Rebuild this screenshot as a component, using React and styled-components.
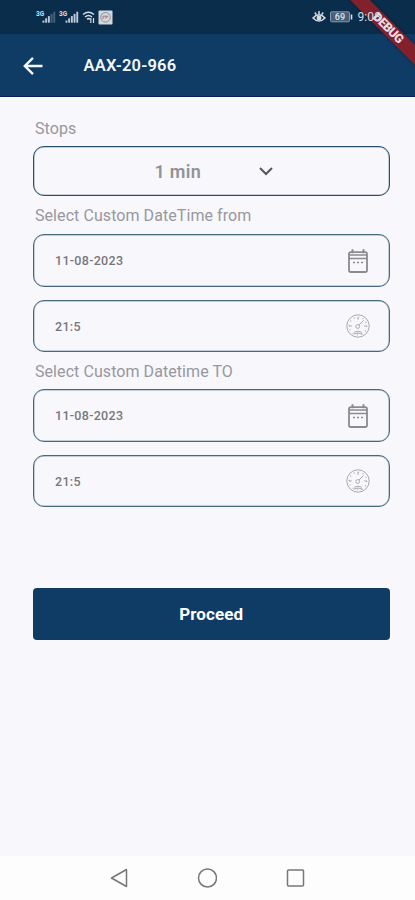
import React from "react";
import styled, { createGlobalStyle } from "styled-components";

const GlobalStyle = createGlobalStyle`
  * { box-sizing: border-box; }
  body { margin: 0; background: #f7f7fc; font-family: Roboto, sans-serif; }
  button { font-family: inherit; }
  svg { display: block; flex: none; }
`;

const Screen = styled.div`
  position: relative;
  width: 415px;
  height: 900px;
  display: flex;
  flex-direction: column;
  overflow: hidden;
  background: #f7f7fc;
`;

const StatusBar = styled.div`
  height: 34px;
  flex: none;
  display: flex;
  justify-content: space-between;
  padding: 9px 34px 0 36px;
  background: #0a2d4b;
  color: #d3dde6;
`;

const StatusGroup = styled.div`
  display: flex;
  height: 16px;
  align-items: center;
  gap: ${(p) => p.$gap}px;
`;

const Clock = styled.span`
  position: relative;
  z-index: 2;
  font-size: 12px;
  line-height: 16px;
  letter-spacing: 0.1px;
`;

const AppBar = styled.header`
  height: 63px;
  flex: none;
  display: flex;
  align-items: center;
  padding-left: 22px;
  background: #0e3c64;
  border-bottom: 1px solid #06205a;
`;

const BackButton = styled.button`
  display: flex;
  padding: 1px 0 0;
  border: 0;
  background: none;
  color: #f5f8fb;
`;

const Title = styled.h1`
  margin: 1px 0 0 39.5px;
  font-size: 16.5px;
  line-height: 20px;
  font-weight: 600;
  letter-spacing: 0.2px;
  color: #f3f7fa;
`;

const DebugBanner = styled.div`
  position: absolute;
  z-index: 1;
  top: 21px;
  right: -33px;
  width: 120px;
  height: 14px;
  transform: rotate(45deg);
  background: #82202c;
  color: #eadde1;
  font-size: 12.5px;
  line-height: 14px;
  font-weight: 900;
  letter-spacing: -0.6px;
  text-align: center;
  box-shadow: 0 0 4px rgba(0, 0, 0, 0.35);
`;

const Form = styled.main`
  flex: 1;
  display: flex;
  flex-direction: column;
  padding: 21px 25px 0 32.5px;
`;

const Label = styled.label`
  height: ${(p) => p.$height}px;
  padding: ${(p) => p.$top}px 0 0 2.5px;
  font-size: 16px;
  line-height: 20px;
  letter-spacing: 0.07px;
  white-space: nowrap;
  color: #98989e;
`;

const Field = styled.div`
  height: ${(p) => p.$height || 52.5}px;
  margin-bottom: ${(p) => p.$after || 0}px;
  flex: none;
  display: flex;
  align-items: center;
  justify-content: space-between;
  padding: 1px 19px 0 21.5px;
  border: 1.5px solid #47697f;
  border-radius: 11px;
  box-shadow: inset 0 0 0 0.5px #8fa5b3;
  color: #77777b;
`;

const SelectField = styled(Field)`
  justify-content: flex-start;
  padding: 0 0 0 121px;
  border-color: #28506c;
`;

const SelectValue = styled.span`
  width: 103.5px;
  font-size: 18px;
  font-weight: 600;
  letter-spacing: 0.3px;
  color: #929296;
`;

const Value = styled.span`
  font-size: 12.5px;
  font-weight: 500;
  letter-spacing: 0.3px;
`;

const Proceed = styled.button`
  height: 52px;
  margin-top: 80.5px;
  padding: 0;
  border: 0;
  border-radius: 4px;
  background: #0e3c64;
  color: #fff;
  font-size: 17px;
  font-weight: 700;
  letter-spacing: 0.1px;
`;

const NavBar = styled.nav`
  height: 44px;
  flex: none;
  display: flex;
  align-items: center;
  padding-left: 109px;
  gap: 68px;
  background: #fdfdfe;
`;

const Signal = ({ bars }) => (
  <svg width="21" height="16" viewBox="0 0 21 16" fill="currentColor">
    <text x="0" y="7" fontSize="6.5" fontWeight="700">3G</text>
    {[0, 1, 2, 3, 4].map((i) => (
      <rect key={i} x={6.5 + i * 2.7} y={11.5 - i * 2.2} width="1.9" height={2.2 + i * 2.2} opacity={i < bars ? 0.9 : 0.3} />
    ))}
  </svg>
);

const Wifi = () => (
  <svg width="14" height="14" viewBox="0 0 14 14" fill="none" stroke="currentColor" strokeWidth="1.5">
    <path d="M1 4.5Q6.5 0 12 4.5M3 7Q6.5 4 10 7M5 9.3Q6.5 8 8 9.3" />
    <path d="M8.8 8v5M11.5 8v5" strokeWidth="1.2" />
  </svg>
);

const AppBadge = () => (
  <svg width="15" height="15" viewBox="0 0 15 15" fill="none">
    <rect x=".5" y=".5" width="14" height="14" rx="1" fill="#d3d6da" />
    <circle cx="7.5" cy="7.3" r="4.8" stroke="#8d9299" />
    <path d="M5 9V6.2h4.5M7 8.3l3-2" stroke="#a3787d" />
  </svg>
);

const Eye = () => (
  <svg width="14" height="14" viewBox="0 0 14 14" fill="none" stroke="currentColor" strokeWidth="1.5">
    <path d="M1 8q6-6.5 12 0-6 6-12 0ZM7 1v3M2.8 2.5l1.5 2M11.2 2.5l-1.5 2" />
    <circle cx="7" cy="8" r="1.7" fill="currentColor" />
  </svg>
);

const Battery = () => (
  <svg width="23" height="12" viewBox="0 0 23 12" fill="none">
    <rect x=".5" y=".8" width="19" height="10" rx="1.2" fill="#476078" stroke="#8799aa" />
    <text x="10" y="9.3" fontSize="9" fontWeight="600" textAnchor="middle" fill="#d3dde6">69</text>
    <path d="M21.5 3.5v5" stroke="#d3dde6" strokeWidth="1.6" />
  </svg>
);

const Arrow = () => (
  <svg width="22" height="20" viewBox="0 0 22 20" fill="none" stroke="currentColor" strokeWidth="2.4">
    <path d="M20.5 10H3M11 1.8 2.8 10l8.2 8.2" />
  </svg>
);

const Chevron = () => (
  <svg width="16" height="12" viewBox="0 0 16 12" fill="none" stroke="#56565a" strokeWidth="2">
    <path d="m2 3 6 6 6-6" />
  </svg>
);

const Calendar = () => (
  <svg width="24" height="26" viewBox="0 0 24 26" fill="none" stroke="#8b8b8f" strokeWidth="1.8">
    <rect x="3" y="4.2" width="18" height="19.8" rx="1.8" />
    <path d="M3 10.5h18M3 7h18" strokeWidth="1.3" />
    <path d="M6.5 1.2v4M17.5 1.2v4" strokeWidth="2" />
    <path d="M7 14.5h2m2 0h2m2 0h2" strokeWidth="1.6" />
  </svg>
);

const Gauge = () => (
  <svg width="24" height="26" viewBox="0 0 24 26" fill="none" stroke="#a9a9af" strokeWidth="1">
    <circle cx="12" cy="13" r="11.2" />
    <circle cx="12" cy="13" r="8.8" strokeWidth="1.2" strokeDasharray="1 3.6" />
    <circle cx="11.7" cy="13.5" r="1.9" />
    <path d="m13 12 4.7-4.6M12 4v2.8M3 13h2.8M18.2 13H21M7.5 21.2q4.5-2.4 9 0M8.3 19.2q3.7-2 7.4 0" />
  </svg>
);

const NavIcon = ({ children }) => (
  <svg width="20" height="22" viewBox="0 0 20 22" fill="none" stroke="#77777a" strokeWidth="1.5" strokeLinejoin="round">
    {children}
  </svg>
);

export default function App() {
  return (
    <Screen>
      <GlobalStyle />
      <StatusBar>
        <StatusGroup $gap={2}>
          <Signal bars={3} />
          <Signal bars={5} />
          <Wifi />
          <AppBadge />
        </StatusGroup>
        <StatusGroup $gap={4}>
          <Eye />
          <Battery />
          <Clock>9:08</Clock>
        </StatusGroup>
      </StatusBar>
      <AppBar>
        <BackButton aria-label="Back"><Arrow /></BackButton>
        <Title>AAX-20-966</Title>
      </AppBar>
      <Form>
        <Label $height={28} $top={1}>Stops</Label>
        <SelectField $height={50}>
          <SelectValue>1 min</SelectValue>
          <Chevron />
        </SelectField>
        <Label $height={38} $top={10}>Select Custom DateTime from</Label>
        <Field $after={13}>
          <Value>11-08-2023</Value>
          <Calendar />
        </Field>
        <Field>
          <Value>21:5</Value>
          <Gauge />
        </Field>
        <Label $height={37} $top={10}>Select Custom Datetime TO</Label>
        <Field $after={13}>
          <Value>11-08-2023</Value>
          <Calendar />
        </Field>
        <Field>
          <Value>21:5</Value>
          <Gauge />
        </Field>
        <Proceed>Proceed</Proceed>
      </Form>
      <NavBar>
        <NavIcon><path d="M17.5 2.5v17L2.5 11Z" /></NavIcon>
        <NavIcon><circle cx="10.5" cy="11" r="9" /></NavIcon>
        <NavIcon><rect x="2.5" y="3" width="16" height="16" rx="1" /></NavIcon>
      </NavBar>
      <DebugBanner>DEBUG</DebugBanner>
    </Screen>
  );
}
